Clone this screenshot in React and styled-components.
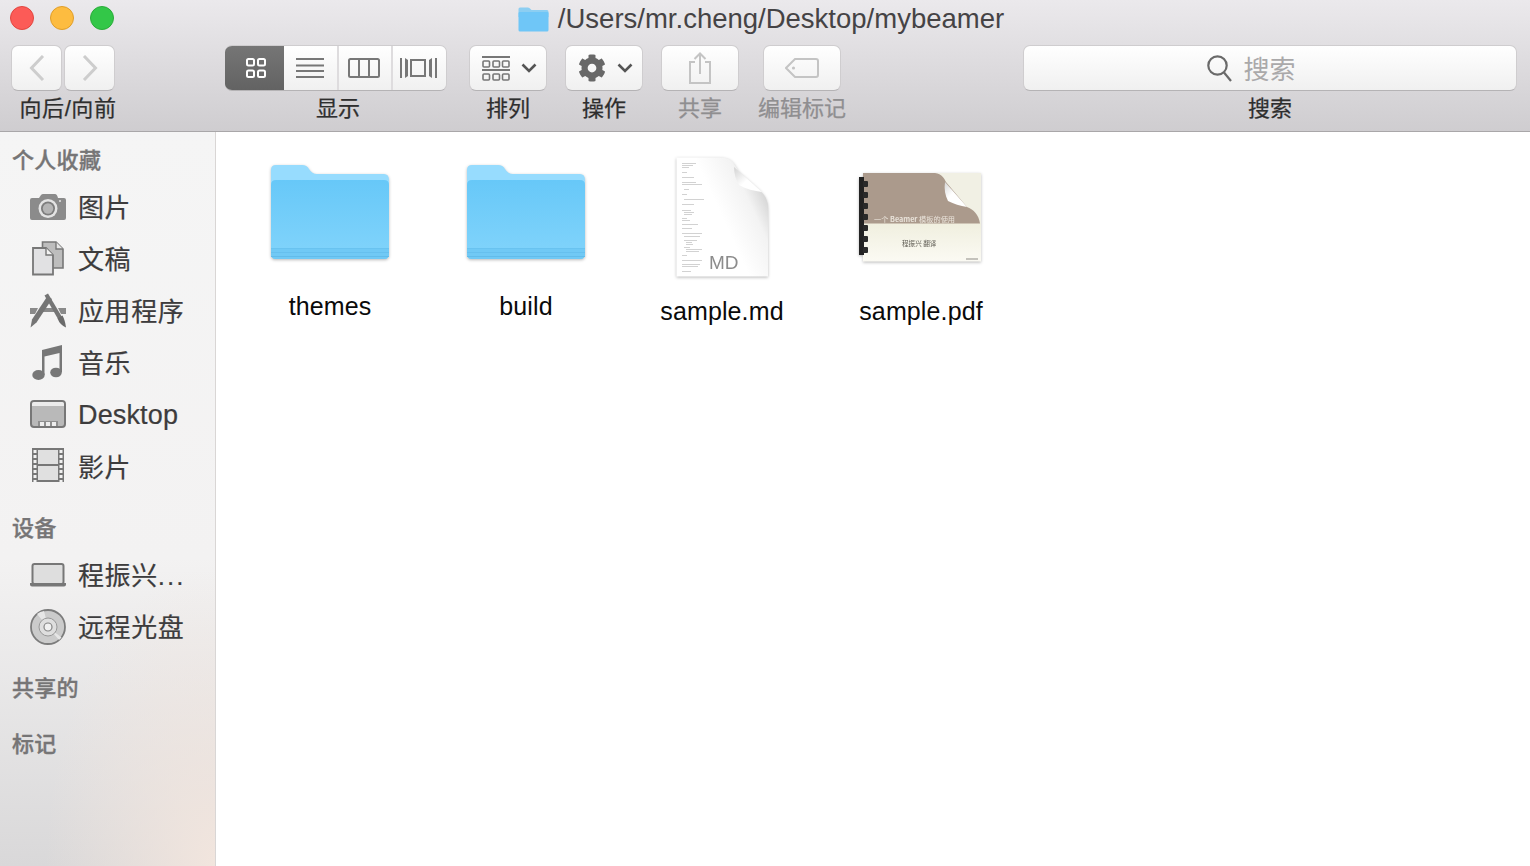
import React from 'react';
import styled, { createGlobalStyle } from 'styled-components';
import { FaCog } from 'react-icons/fa';

const FONT = '"Liberation Sans", "Noto Sans CJK SC", sans-serif';

const GlobalStyle = createGlobalStyle`
  html, body {
    margin: 0;
    padding: 0;
    height: 100%;
    overflow: hidden;
    background: white;
    font-family: ${FONT};
  }

  #root {
    height: 100%;
  }
`;

const Window = styled.div`
  display: flex;
  flex-direction: column;
  height: 100%;
`;

const Header = styled.header`
  flex: none;
  height: 131px;
  background: linear-gradient(#ebe9ec, #cfcdd0);
  border-bottom: 1px solid #a9a7a9;
`;

const TitleRow = styled.div`
  position: relative;
  display: flex;
  align-items: center;
  justify-content: center;
  height: 38px;
  padding-right: 8px;
  gap: 9px;
`;

const TrafficLights = styled.div`
  position: absolute;
  left: 10px;
  top: 6px;
  display: flex;
  gap: 16px;
`;

const Light = styled.span`
  width: 22px;
  height: 22px;
  border-radius: 50%;
  background: ${props => props.$color};
  border: 1px solid ${props => props.$edge};
`;

const Title = styled.div`
  font-size: 27.5px;
  color: #454345;
  line-height: 38px;
  white-space: nowrap;
`;

const Toolbar = styled.div`
  display: flex;
  padding: 7px 13px 0 11px;
`;

const Group = styled.div`
  display: flex;
  flex-direction: column;
  align-items: center;
  width: ${props => props.$width}px;
  margin-left: ${props => props.$gap || 0}px;
`;

const GroupLabel = styled.div`
  margin-top: 3px;
  margin-left: ${props => props.$shift || 0}px;
  height: 30px;
  line-height: 30px;
  font-size: 22px;
  letter-spacing: ${props => props.$tracking || 0}px;
  white-space: nowrap;
  color: ${props => (props.$disabled ? '#8f8e90' : '#2e2e2e')};
  -webkit-text-stroke: 0.25px currentColor;
`;

const Button = styled.div`
  box-sizing: border-box;
  display: flex;
  align-items: center;
  justify-content: center;
  flex: none;
  gap: ${props => props.$gap || 0}px;
  width: ${props => props.$width}px;
  height: 46px;
  padding-left: ${props => props.$inset || 0}px;
  background: linear-gradient(#ffffff, #f0f0f0);
  border: 1px solid #cfcdcf;
  border-bottom-color: #b5b3b5;
  border-radius: 7px;
`;

const NavPair = styled.div`
  display: flex;
  gap: 2px;
`;

const Segments = styled.div`
  display: grid;
  grid-template-columns: 59px 53px 54px 55px;
  flex: none;
  height: 46px;
  border-radius: 7px;
  overflow: hidden;
  box-sizing: border-box;
  border: 1px solid #cfcdcf;
  border-bottom-color: #b5b3b5;
  border-left: 0;
`;

const Segment = styled.div`
  display: flex;
  align-items: center;
  justify-content: center;
  padding-left: ${props => (props.$active ? 3 : 0)}px;
  padding-right: ${props => (props.$active ? 0 : 2)}px;
  background: ${props => (props.$active
    ? 'linear-gradient(#767676, #626262)'
    : 'linear-gradient(#ffffff, #f0f0f0)')};
  border-left: ${props => (props.$first ? 0 : '2px solid #dedcde')};
  margin-top: ${props => (props.$active ? -1 : 0)}px;
  margin-bottom: ${props => (props.$active ? -1 : 0)}px;
`;

const SearchField = styled(Button)`
  gap: 11px;
  padding-right: 37px;
`;

const SearchHint = styled.span`
  font-size: 26px;
  margin-bottom: 2px;
  color: #aaa9aa;
`;

const Body = styled.div`
  flex: 1;
  display: flex;
  min-height: 0;
`;

const Sidebar = styled.aside`
  box-sizing: border-box;
  flex: none;
  width: 216px;
  padding-top: 8px;
  border-right: 1px solid #d9d6d5;
  background:
    radial-gradient(ellipse 170px 300px at 100% 100%, rgba(243, 230, 222, 0.95), rgba(243, 230, 222, 0)),
    linear-gradient(#f5f5f5 0%, #f3f2f2 58%, #d9d8d9 100%);
`;

const Section = styled.section`
  margin-bottom: 15px;
`;

const SectionTitle = styled.h3`
  margin: 0;
  padding-left: 12px;
  height: 41px;
  line-height: 41px;
  font-size: 22px;
  font-weight: 500;
  letter-spacing: 0.3px;
  color: #767576;
  -webkit-text-stroke: 0.35px currentColor;
`;

const SideRow = styled.div`
  display: flex;
  align-items: center;
  gap: 12px;
  height: 52px;
  padding-left: 30px;
  color: #3d3c3d;
  white-space: nowrap;
`;

const SideLabel = styled.span`
  font-size: ${props => (props.$latin ? 27 : 26)}px;
  letter-spacing: ${props => (props.$latin ? 0.15 : 0.6)}px;
  margin-bottom: ${props => (props.$latin ? 0 : 4)}px;
  -webkit-text-stroke: 0.2px currentColor;
`;

const Dots = styled.span`
  font-size: 26px;
  letter-spacing: 2px;
`;

const SideIcon = styled.svg`
  flex: none;
  width: 36px;
  height: 36px;
  overflow: visible;
`;

const Files = styled.main`
  flex: 1;
  display: flex;
  align-items: flex-start;
  padding: 15px 0 0 16px;
  background: white;
`;

const FileItem = styled.div`
  display: flex;
  flex-direction: column;
  align-items: center;
  width: 196px;
  margin-left: ${props => props.$nudge || 0}px;
`;

const IconFrame = styled.div`
  display: flex;
  align-items: center;
  justify-content: center;
  height: ${props => (props.$folder ? 130 : 140)}px;
`;

const FileName = styled.div`
  margin-top: ${props => (props.$folder ? 14 : 9)}px;
  height: 30px;
  line-height: 30px;
  font-size: 25px;
  letter-spacing: 0.12px;
  color: #0a0a0a;
  white-space: nowrap;
`;

const BigIcon = styled.svg`
  display: block;
  overflow: visible;
  filter: drop-shadow(0 1px 1.5px rgba(0, 0, 0, 0.28));
`;

const SoftText = styled.text`
  filter: blur(0.35px);
`;

const FolderIcon = () => (
  <BigIcon width="120" height="95" viewBox="0 0 120 95">
    <defs>
      <linearGradient id="folderFront" x1="0" y1="0" x2="0" y2="1">
        <stop offset="0" stopColor="#67c8f8" />
        <stop offset="1" stopColor="#82d4fb" />
      </linearGradient>
    </defs>
    <path d="M1 15 V5 Q1 0 6 0 H32 Q37 0 39 4 Q42 9 47 9 H114 Q119 9 119 15 V30 H1 Z" fill="#97dcfe" />
    <path d="M1 20 Q1 15 6 15 H114 Q119 15 119 20 V89 Q119 94 114 94 H6 Q1 94 1 89 Z" fill="url(#folderFront)" />
    <path d="M1 83 H119 V89 Q119 94 114 94 H6 Q1 94 1 89 Z" fill="#70c9f5" />
    <rect x="1" y="83" width="118" height="1" fill="#69c3f0" />
    <rect x="1" y="87" width="118" height="1" fill="#66c0ee" />
    <rect x="1" y="91" width="118" height="1" fill="#62bcea" />
  </BigIcon>
);

const DOC_LINES = [
  [6, 6, 14], [6, 8, 11], [6, 10, 7], [6, 15, 5], [6, 20, 12], [6, 25, 14], [6, 27, 20], [8, 32, 5],
  [6, 37, 5], [8, 42, 20], [6, 47, 12], [6, 53, 9], [8, 55, 10], [8, 57, 8], [6, 61, 5], [6, 63, 8],
  [6, 67, 16], [6, 71, 10], [6, 76, 20], [8, 79, 16], [8, 83, 13], [10, 85, 6], [10, 87, 7], [8, 90, 6],
  [10, 92, 16], [10, 94, 13], [6, 98, 5], [6, 103, 20], [6, 107, 18], [6, 109, 16], [6, 114, 9],
];

const MarkdownIcon = () => (
  <BigIcon width="93" height="120" viewBox="0 0 93 120">
    <defs>
      <linearGradient id="mdPage" x1="0.45" y1="0.42" x2="0.95" y2="0.12">
        <stop offset="0" stopColor="#ffffff" />
        <stop offset="0.55" stopColor="#f3f3f3" />
        <stop offset="1" stopColor="#c9c9c9" />
      </linearGradient>
      <linearGradient id="mdCurl" x1="0" y1="0" x2="1" y2="1">
        <stop offset="0" stopColor="#d2d2d2" />
        <stop offset="0.5" stopColor="#ffffff" />
      </linearGradient>
    </defs>
    <path d="M0.5 0.5 H46 C55 1 58 6 62 13 C68 22 78 30 85 35 C90 39 92 45 92 52 V119.5 H0.5 Z" fill="url(#mdPage)" />
    <path d="M58 10 L86 35 C78 34 70 32 63 28 C60 23 58 17 58 10 Z" fill="url(#mdCurl)" />
    {DOC_LINES.map(([x, y, w]) => (
      <rect key={`${x}-${y}`} x={x} y={y} width={w} height="0.6" fill="#b5b5b5" />
    ))}
    <text x="33" y="112" fontSize="19" fill="#8c8c8c" fontFamily="Liberation Sans, sans-serif">MD</text>
  </BigIcon>
);

const RING_ROWS = [10, 21, 32, 43, 54, 65, 76];

const PdfIcon = () => (
  <BigIcon width="124" height="92" viewBox="0 0 124 92">
    <defs>
      <linearGradient id="pdfLower" x1="0" y1="0" x2="0" y2="1">
        <stop offset="0" stopColor="#f0efdf" />
        <stop offset="1" stopColor="#fbfaf3" />
      </linearGradient>
      <linearGradient id="pdfCurl" x1="0" y1="0" x2="1" y2="1">
        <stop offset="0" stopColor="#d6d6d6" />
        <stop offset="0.4" stopColor="#ffffff" />
      </linearGradient>
    </defs>
    <rect x="4" y="2" width="118" height="50" fill="#f1f0e4" />
    <rect x="4" y="52" width="118" height="38.5" fill="url(#pdfLower)" />
    <path d="M4 2 H76 C83 3 85 7 87 11 L108 36 C114 38 120 44 121 52.5 H4 Z" fill="#ab9a8c" />
    <path d="M86 11 L108 36 C101 35 95 33 89 30 C86 24 85 18 86 11 Z" fill="url(#pdfCurl)" />
    <SoftText x="15" y="51" fontSize="7.2" fill="#e9e3da" fontFamily="Noto Sans CJK SC, sans-serif">一个 <tspan fontWeight="700">Beamer</tspan> 模板的使用</SoftText>
    <SoftText x="43" y="74.5" fontSize="6.6" fill="#5d5a52" fontFamily="Noto Sans CJK SC, sans-serif">程振兴 翻译</SoftText>
    <rect x="107" y="87.5" width="12" height="1" fill="#8d8c86" />
    <rect x="0" y="6" width="5" height="78" fill="#222" />
    {RING_ROWS.map(y => (
      <rect key={y} x="4" y={y} width="5" height="6" rx="1" fill="#2a2a2a" />
    ))}
  </BigIcon>
);

const ICON_GREY = '#777';

const CameraIcon = () => (
  <SideIcon viewBox="0 0 36 36">
    <path d="M2 9 H9 L11 6 Q12 5 13 5 H25 Q27 5 28 9 H34 Q36 9 36 11 V29 Q36 31 34 31 H2 Q0 31 0 29 V11 Q0 9 2 9 Z" fill="#8b8b8b" />
    <circle cx="18" cy="19.5" r="9.5" fill="#e4e4e4" />
    <circle cx="18" cy="19.5" r="7" fill="#7d7d7d" />
    <circle cx="18" cy="19.5" r="5.2" fill="#b5b5b5" />
    <circle cx="30" cy="12" r="1" fill="#e4e4e4" />
  </SideIcon>
);

const DocumentsIcon = () => (
  <SideIcon viewBox="0 0 36 36">
    <path d="M12.5 1 H26 L33 8 V27 H12.5 Z" fill="#bdbdbd" stroke={ICON_GREY} strokeWidth="1.6" />
    <path d="M26 1 V8 H33" fill="#e6e6e6" stroke={ICON_GREY} strokeWidth="1.4" />
    <path d="M3 7 H16 L23 14 V33.5 H3 Z" fill="#e1e1e3" stroke={ICON_GREY} strokeWidth="1.8" />
    <path d="M16 7 V14 H23" fill="#f2f2f2" stroke={ICON_GREY} strokeWidth="1.4" />
  </SideIcon>
);

const AppsIcon = () => (
  <SideIcon viewBox="0 0 36 36">
    <path d="M0 15 H8 L5 21 H0 Z M28 15 H36 V21 H31 Z M12 15 H24 L26 19 H10 Z" fill="#8a8a8a" />
    <path d="M0.5 34.5 L2 26.5 L17.5 3 L22 6 L6.5 29.5 Z" fill="#757575" />
    <path d="M14.5 2.5 L18 0.5 L32 24 L28 26 Z" fill="#757575" />
    <path d="M27.5 25.5 L32.5 22.5 Q35 27 36 34.5 Q30 32 27.5 25.5 Z" fill="#6a6a6a" />
  </SideIcon>
);

const MusicIcon = () => (
  <SideIcon viewBox="0 0 36 36">
    <ellipse cx="8.5" cy="30" rx="6.2" ry="5" fill={ICON_GREY} />
    <ellipse cx="26" cy="27.5" rx="5.8" ry="4.8" fill={ICON_GREY} />
    <path d="M12 30 V5 L32 0 V27 H29.5 V8 L14.5 11.5 V30 Z" fill={ICON_GREY} />
  </SideIcon>
);

const DesktopIcon = () => (
  <SideIcon viewBox="0 0 36 36">
    <rect x="1" y="4" width="34" height="26" rx="3" fill="#b9b9b9" stroke={ICON_GREY} strokeWidth="2" />
    <path d="M2 9 V7 Q2 5 4 5 H32 Q34 5 34 7 V9 Z" fill="#ececec" />
    <rect x="8" y="24" width="20" height="5" fill="#8f8f8f" />
    <rect x="10" y="25" width="4" height="4" fill="#eee" />
    <rect x="16" y="25" width="4" height="4" fill="#eee" />
    <rect x="22" y="25" width="4" height="4" fill="#eee" />
  </SideIcon>
);

const FILM_HOLES = [1, 6, 11, 16, 21, 26, 31];

const MovieIcon = () => (
  <SideIcon viewBox="0 0 36 36">
    <rect x="2" y="-1" width="32" height="34" fill={ICON_GREY} />
    <rect x="8" y="1" width="20" height="14" fill="#e0e0e0" />
    <rect x="8" y="17" width="20" height="14" fill="#e0e0e0" />
    {FILM_HOLES.map(y => (
      <React.Fragment key={y}>
        <rect x="3.5" y={y} width="3" height="3" fill="#f2f2f2" />
        <rect x="29.5" y={y} width="3" height="3" fill="#f2f2f2" />
      </React.Fragment>
    ))}
  </SideIcon>
);

const LaptopIcon = () => (
  <SideIcon viewBox="0 0 36 36">
    <rect x="2.5" y="7" width="31" height="20" rx="2" fill="#dedede" stroke={ICON_GREY} strokeWidth="2" />
    <path d="M0 26 H36 V27.5 Q36 29.5 34 29.5 H2 Q0 29.5 0 27.5 Z" fill={ICON_GREY} />
  </SideIcon>
);

const DiscIcon = () => (
  <SideIcon viewBox="0 0 36 36">
    <circle cx="18" cy="18" r="17" fill="#cbcbcb" stroke="#7c7c7c" strokeWidth="1.8" />
    <path d="M18 18 L7 5 A17 17 0 0 1 14 2 Z M18 18 L29 31 A17 17 0 0 0 31.5 28.5 Z" fill="#e6e6e6" />
    <circle cx="18" cy="18" r="9" fill="#dedede" stroke="#999" strokeWidth="1" />
    <circle cx="18" cy="18" r="4" fill="#f0f0f0" stroke="#858585" strokeWidth="1.2" />
  </SideIcon>
);

const ChevronIcon = ({ d }) => (
  <svg width="16" height="26" viewBox="0 0 16 26" fill="none">
    <path d={d} stroke="#cdcdcd" strokeWidth="3" />
  </svg>
);

const SmallChevron = () => (
  <svg width="16" height="10" viewBox="0 0 16 10" fill="none">
    <path d="M1.5 1.5 L8 8 L14.5 1.5" stroke="#555" strokeWidth="2.6" />
  </svg>
);

const GridViewIcon = () => (
  <svg width="20" height="20" viewBox="0 0 20 20" fill="none" stroke="#fff" strokeWidth="2">
    <rect x="1" y="1" width="7" height="6.5" rx="1.5" />
    <rect x="12" y="1" width="7" height="6.5" rx="1.5" />
    <rect x="1" y="12.5" width="7" height="6.5" rx="1.5" />
    <rect x="12" y="12.5" width="7" height="6.5" rx="1.5" />
  </svg>
);

const ListViewIcon = () => (
  <svg width="28" height="20" viewBox="0 0 28 20" stroke="#777" strokeWidth="2">
    <path d="M0 1 H28 M0 7.5 H28 M0 13 H28 M0 19 H28" />
  </svg>
);

const ColumnViewIcon = () => (
  <svg width="32" height="20" viewBox="0 0 32 20" fill="none" stroke="#777" strokeWidth="2">
    <rect x="1" y="1" width="30" height="18" rx="1.5" />
    <path d="M11 1 V19 M21 1 V19" />
  </svg>
);

const CoverViewIcon = () => (
  <svg width="37" height="20" viewBox="0 0 37 20" fill="#777">
    <rect x="0" y="0" width="2" height="20" />
    <path d="M5 0 L8 2 V18 L5 20 Z" />
    <rect x="11" y="2" width="14" height="16" fill="none" stroke="#777" strokeWidth="2" />
    <path d="M32 0 L29 2 V18 L32 20 Z" />
    <rect x="35" y="0" width="2" height="20" />
  </svg>
);

const ArrangeIcon = () => (
  <svg width="28" height="25" viewBox="0 0 28 25" fill="none" stroke="#777" strokeWidth="1.6">
    <path d="M0 1 H28 M0 14 H28" strokeWidth="2" />
    <rect x="1" y="5" width="6.5" height="6" rx="1" />
    <rect x="11" y="5" width="6.5" height="6" rx="1" />
    <rect x="20.5" y="5" width="6.5" height="6" rx="1" />
    <rect x="1" y="18" width="6.5" height="6" rx="1" />
    <rect x="11" y="18" width="6.5" height="6" rx="1" />
    <rect x="20.5" y="18" width="6.5" height="6" rx="1" />
  </svg>
);

const ShareIcon = () => (
  <svg width="22" height="32" viewBox="0 0 22 32" fill="none" stroke="#c4c4c4" strokeWidth="2">
    <path d="M6 10 H1 V31 H21 V10 H16" />
    <path d="M11 22 V2 M5.5 7 L11 1.5 L16.5 7" />
  </svg>
);

const TagIcon = () => (
  <svg width="34" height="20" viewBox="0 0 34 20" fill="none" stroke="#c4c4c4" strokeWidth="2">
    <path d="M10 1 H31 Q33 1 33 3 V17 Q33 19 31 19 H10 L1 10 Z" />
    <circle cx="8.5" cy="10" r="1.6" fill="#c4c4c4" stroke="none" />
  </svg>
);

const SearchIcon = () => (
  <svg width="25" height="27" viewBox="0 0 25 27" fill="none" stroke="#6a6a6a" strokeWidth="2.2">
    <circle cx="10.5" cy="10.5" r="9.2" />
    <path d="M17 17.5 L24 26" />
  </svg>
);

const TitleFolder = styled.svg`
  flex: none;
`;

const favourites = [
  { id: 'pictures', name: '图片', Icon: CameraIcon },
  { id: 'documents', name: '文稿', Icon: DocumentsIcon },
  { id: 'apps', name: '应用程序', Icon: AppsIcon },
  { id: 'music', name: '音乐', Icon: MusicIcon },
  { id: 'desktop', name: 'Desktop', Icon: DesktopIcon, latin: true },
  { id: 'movies', name: '影片', Icon: MovieIcon },
];

const devices = [
  { id: 'laptop', name: <>程振兴<Dots>...</Dots></>, Icon: LaptopIcon },
  { id: 'disc', name: '远程光盘', Icon: DiscIcon },
];

const SidebarRows = ({ items }) => items.map(({ id, name, Icon, latin }) => (
  <SideRow key={id}>
    <Icon />
    <SideLabel $latin={latin}>{name}</SideLabel>
  </SideRow>
));

const App = () => (
  <Window>
    <GlobalStyle />
    <Header>
      <TitleRow>
        <TrafficLights>
          <Light $color="#fc5b57" $edge="#e2463f" />
          <Light $color="#fdbc40" $edge="#e09e2a" />
          <Light $color="#33c748" $edge="#2aac39" />
        </TrafficLights>
        <TitleFolder width="31" height="25" viewBox="0 0 31 25">
          <path d="M0.5 4 V2 Q0.5 0.5 2 0.5 H10 Q11.5 0.5 12.5 2 L13.5 3 H29 Q30.5 3 30.5 5 V10 H0.5 Z" fill="#8ccef2" />
          <path d="M0.5 6 Q0.5 5 2 5 H29 Q30.5 5 30.5 6 V23 Q30.5 24.5 29 24.5 H2 Q0.5 24.5 0.5 23 Z" fill="#6fc6f7" />
        </TitleFolder>
        <Title>/Users/mr.cheng/Desktop/mybeamer</Title>
      </TitleRow>
      <Toolbar>
        <Group $width={104}>
          <NavPair>
            <Button $width={51}>
              <ChevronIcon d="M14 1 L2.5 13 L14 25" />
            </Button>
            <Button $width={51}>
              <ChevronIcon d="M2 1 L13.5 13 L2 25" />
            </Button>
          </NavPair>
          <GroupLabel $shift={10} $tracking={0.6}>向后/向前</GroupLabel>
        </Group>
        <Group $width={222} $gap={110}>
          <Segments>
            <Segment $active $first><GridViewIcon /></Segment>
            <Segment $first><ListViewIcon /></Segment>
            <Segment><ColumnViewIcon /></Segment>
            <Segment><CoverViewIcon /></Segment>
          </Segments>
          <GroupLabel $shift={4}>显示</GroupLabel>
        </Group>
        <Group $width={78} $gap={22}>
          <Button $width={78} $gap={11} $inset={2}>
            <ArrangeIcon />
            <SmallChevron />
          </Button>
          <GroupLabel>排列</GroupLabel>
        </Group>
        <Group $width={78} $gap={18}>
          <Button $width={78} $gap={11} $inset={2}>
            <FaCog size={28} color="#686868" />
            <SmallChevron />
          </Button>
          <GroupLabel>操作</GroupLabel>
        </Group>
        <Group $width={78} $gap={18}>
          <Button $width={78}><ShareIcon /></Button>
          <GroupLabel $disabled>共享</GroupLabel>
        </Group>
        <Group $width={78} $gap={24}>
          <Button $width={78}><TagIcon /></Button>
          <GroupLabel $disabled>编辑标记</GroupLabel>
        </Group>
        <Group $width={494} $gap={182}>
          <SearchField $width={494}>
            <SearchIcon />
            <SearchHint>搜索</SearchHint>
          </SearchField>
          <GroupLabel>搜索</GroupLabel>
        </Group>
      </Toolbar>
    </Header>
    <Body>
      <Sidebar>
        <Section>
          <SectionTitle>个人收藏</SectionTitle>
          <SidebarRows items={favourites} />
        </Section>
        <Section>
          <SectionTitle>设备</SectionTitle>
          <SidebarRows items={devices} />
        </Section>
        <Section>
          <SectionTitle>共享的</SectionTitle>
        </Section>
        <Section>
          <SectionTitle>标记</SectionTitle>
        </Section>
      </Sidebar>
      <Files>
        <FileItem>
          <IconFrame $folder><FolderIcon /></IconFrame>
          <FileName $folder>themes</FileName>
        </FileItem>
        <FileItem>
          <IconFrame $folder><FolderIcon /></IconFrame>
          <FileName $folder>build</FileName>
        </FileItem>
        <FileItem>
          <IconFrame><MarkdownIcon /></IconFrame>
          <FileName>sample.md</FileName>
        </FileItem>
        <FileItem $nudge={3}>
          <IconFrame><PdfIcon /></IconFrame>
          <FileName>sample.pdf</FileName>
        </FileItem>
      </Files>
    </Body>
  </Window>
);

export default App;
